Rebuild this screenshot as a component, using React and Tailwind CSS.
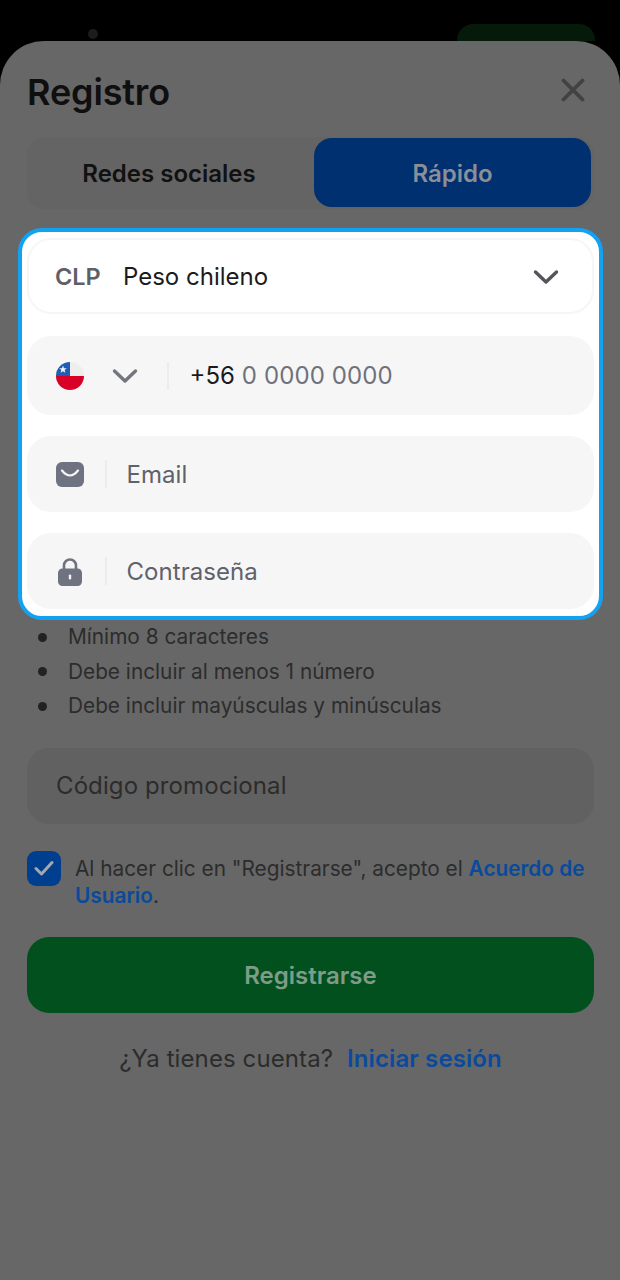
import React from "react";

function Chevron({ className, stroke }) {
  return (
    <svg viewBox="0 0 26 16" className={className} fill="none">
      <path d="M2.5 3 L13 13 L23.5 3" stroke={stroke} strokeWidth="3.4" strokeLinecap="round" strokeLinejoin="round" />
    </svg>
  );
}

function ChileFlag() {
  return (
    <svg viewBox="0 0 28 28" className="w-[28px] h-[28px] shrink-0">
      <defs>
        <clipPath id="flagclip"><circle cx="14" cy="14" r="14" /></clipPath>
      </defs>
      <g clipPath="url(#flagclip)">
        <rect width="28" height="14" fill="#eeeeee" />
        <rect y="14" width="28" height="14" fill="#d80027" />
        <rect width="14" height="14" fill="#1f5cb5" />
        <path d="M7 3.6 L8 6.2 L10.8 6.3 L8.6 8 L9.4 10.7 L7 9.2 L4.6 10.7 L5.4 8 L3.2 6.3 L6 6.2 Z" fill="#f0f0f0" />
      </g>
    </svg>
  );
}

function Divider() {
  return <div className="w-[1.5px] h-[28px] bg-[#ececee] shrink-0" />;
}

function Bullet({ children }) {
  return (
    <li className="flex items-center h-[34.5px]">
      <span className="w-[9px] h-[9px] rounded-full bg-[#222222] ml-[11px] mr-[21px] shrink-0" />
      <span>{children}</span>
    </li>
  );
}

export default function App() {
  return (
    <div className="w-[620px] h-[1280px] bg-black overflow-hidden flex flex-col" style={{ fontFamily: "Inter, 'Noto Sans', sans-serif" }}>
      <div className="h-[41px] shrink-0 flex items-start pl-[88px] pr-[25px] justify-between overflow-hidden">
        <div className="w-[10px] h-[10px] mt-[29px] rounded-full bg-[#1c1c1c]" />
        <div className="w-[138px] h-[40px] mt-[24px] rounded-[16px] bg-[#061a09]" />
      </div>

      <div className="flex-1 bg-[#676767] rounded-t-[44px] pl-[27px] pr-[26px] flex flex-col">
        <div className="flex items-center justify-between h-[96px] shrink-0 pr-[9px]">
          <h1 className="text-[36px] leading-[44px] font-semibold text-[#0f0f0f] tracking-[-0.15px] mt-[6px]">Registro</h1>
          <svg viewBox="0 0 24 24" className="w-[24px] h-[24px] mt-[2px]" fill="none">
            <path d="M2.5 2.5 L21.5 21.5 M21.5 2.5 L2.5 21.5" stroke="#424242" strokeWidth="3.8" strokeLinecap="round" />
          </svg>
        </div>

        <div className="h-[72px] shrink-0 bg-[#646464] rounded-[18px] flex pr-[3px] pt-[1px] pb-[2px]">
          <div className="flex-1 flex items-center justify-center text-[24px] font-semibold text-[#111111] pt-[2px] pr-[3px]">Redes sociales</div>
          <div className="w-[277px] rounded-[18px] bg-[#003070] flex items-center justify-center text-[24px] font-semibold text-[#8a8f98] pt-[2px]">Rápido</div>
        </div>

        <div className="mt-[19px] -mx-[9px] h-[392px] shrink-0 bg-white border-[4px] border-[#12a2f2] rounded-[24px] px-[5px] pt-[6px] flex flex-col">
          <div className="h-[76px] shrink-0 border-2 border-[#f6f6f7] rounded-[24px] flex items-center pl-[26px] pr-[33px]">
            <span className="text-[23.5px] font-semibold text-[#5e6068] w-[68px] pt-[1px]">CLP</span>
            <span className="text-[24px] text-[#1b1b1f] flex-1 pt-[1px]">Peso chileno</span>
            <Chevron className="w-[26px] h-[16px] mt-[1px]" stroke="#54555a" />
          </div>

          <div className="mt-[22px] h-[79px] shrink-0 bg-[#f6f6f7] rounded-[24px] flex items-center pl-[29px]">
            <ChileFlag />
            <Chevron className="w-[26px] h-[16px] ml-[28px]" stroke="#73757f" />
            <div className="ml-[29px]"><Divider /></div>
            <span className="ml-[21px] text-[24px] text-[#1b1b1f]">+56</span>
            <span className="ml-[7px] text-[24px] tracking-[0.1px] text-[#6f727b]">0 0000 0000</span>
          </div>

          <div className="mt-[21px] h-[76px] shrink-0 bg-[#f6f6f7] rounded-[24px] flex items-center pl-[29px]">
            <svg viewBox="0 0 28 25" className="w-[28px] h-[25px] shrink-0 mt-[1px]">
              <rect width="28" height="25" rx="6" fill="#6f7280" />
              <path d="M6 8.5 Q14 18.5 22 8.5" stroke="#f6f6f7" strokeWidth="2.2" fill="none" strokeLinecap="round" />
            </svg>
            <div className="ml-[21px]"><Divider /></div>
            <span className="ml-[20px] text-[24px] tracking-[0.05px] text-[#5f626a] pt-[1px]">Email</span>
          </div>

          <div className="mt-[21px] h-[76px] shrink-0 bg-[#f6f6f7] rounded-[24px] flex items-center pl-[29px]">
            <div className="w-[28px] flex justify-center shrink-0">
              <svg viewBox="0 0 24 29" className="w-[24px] h-[29px]">
                <path d="M6 13 V8.5 a6 6 0 0 1 12 0 V13" stroke="#6f7280" strokeWidth="2.6" fill="none" />
                <rect y="11.5" width="24" height="17.5" rx="4.5" fill="#6f7280" />
                <rect x="10.8" y="17.5" width="2.4" height="5" rx="1" fill="#f6f6f7" />
              </svg>
            </div>
            <div className="ml-[21px]"><Divider /></div>
            <span className="ml-[20px] text-[24px] tracking-[0.05px] text-[#5f626a] pt-[1px]">Contraseña</span>
          </div>
        </div>

        <ul className="text-[20.8px] text-[#2c2c2c] leading-[34.5px]">
          <Bullet>Mínimo 8 caracteres</Bullet>
          <Bullet>Debe incluir al menos 1 número</Bullet>
          <Bullet>Debe incluir mayúsculas y minúsculas</Bullet>
        </ul>

        <div className="mt-[24px] h-[76px] shrink-0 bg-[#616161] rounded-[22px] flex items-center pl-[29px] text-[24px] tracking-[0.1px] text-[#2c2c2c]">
          Código promocional
        </div>

        <div className="mt-[27px] flex items-start gap-[14px]">
          <div className="w-[34px] h-[35px] shrink-0 rounded-[9px] bg-[#003f8f] flex items-center justify-center">
            <svg viewBox="0 0 20 16" className="w-[20px] h-[16px]" fill="none">
              <path d="M2 8.5 L7.5 14 L18 2.5" stroke="#a3a8b0" strokeWidth="3" strokeLinecap="round" strokeLinejoin="round" />
            </svg>
          </div>
          <p className="text-[20.8px] leading-[27px] text-[#2c2c2c] mt-[4px]">
            Al hacer clic en "Registrarse", acepto el <span className="font-semibold text-[#0a4a9c]">Acuerdo de Usuario</span>.
          </p>
        </div>

        <div className="mt-[28px] h-[76px] shrink-0 rounded-[22px] bg-[#03501f] flex items-center justify-center text-[24px] font-semibold text-[#7f9c89] pt-[2px]">
          Registrarse
        </div>

        <div className="mt-[28px] flex items-center justify-center gap-[14px] text-[24px] tracking-[0.1px]">
          <span className="text-[#2c2c2c]">¿Ya tienes cuenta?</span>
          <span className="font-semibold text-[#0a4a9c]">Iniciar sesión</span>
        </div>
      </div>
    </div>
  );
}
